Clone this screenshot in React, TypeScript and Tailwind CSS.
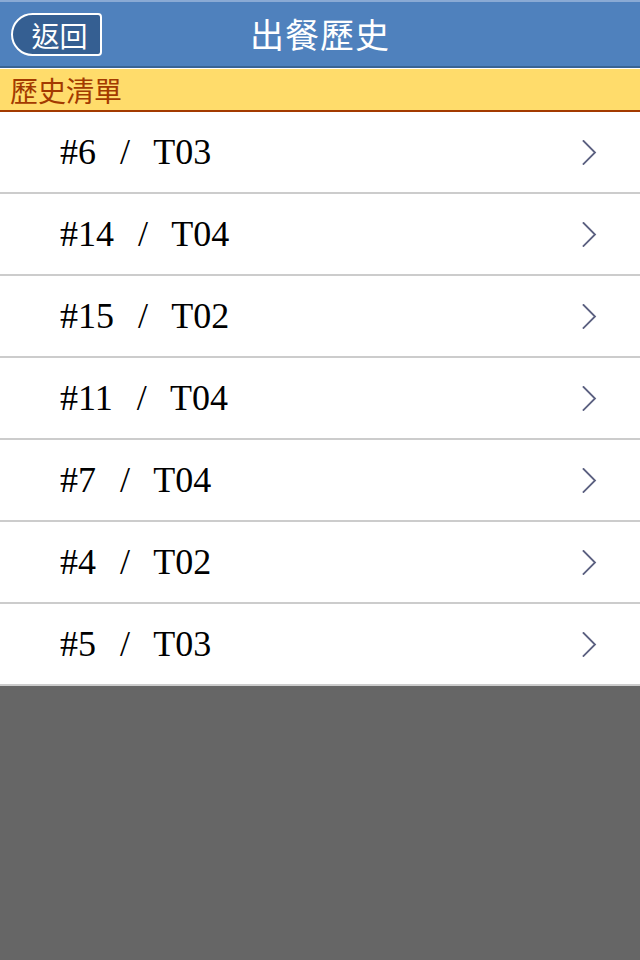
const ORDERS = [
  { id: 6, table: "T03" },
  { id: 14, table: "T04" },
  { id: 15, table: "T02" },
  { id: 11, table: "T04" },
  { id: 7, table: "T04" },
  { id: 4, table: "T02" },
  { id: 5, table: "T03" },
];

const CJK = "font-['Noto_Sans_CJK_TC',sans-serif]";

function Chevron() {
  return (
    <svg width="15" height="25" viewBox="0 0 15 25" fill="none" className="shrink-0">
      <path d="M1.5 1 L13 12.5 L1.5 24" stroke="#5b6080" strokeWidth="1.8" strokeLinecap="square" />
    </svg>
  );
}

export default function App() {
  return (
    <div className="min-h-screen bg-[#666666] flex flex-col">
      {/* Header */}
      <header className="relative h-[68px] shrink-0 bg-[#4f81bd] border-t-2 border-t-[#8aaad4] border-b-2 border-b-[#3a6494] flex items-center justify-center">
        <button
          className={`absolute left-[11px] top-[11px] h-[43px] w-[91px] rounded-l-[22px] rounded-r-[4px] border-2 border-white bg-[#355f92] text-white text-[28px] leading-none flex items-center justify-center pl-[6px] ${CJK}`}
        >
          返回
        </button>
        <h1 className={`text-white text-[34px] leading-none tracking-[1px] ${CJK}`}>出餐歷史</h1>
      </header>

      {/* Section title */}
      <div className="h-[41px] shrink-0 box-content bg-[#ffdc6b] border-t border-t-white border-b-2 border-b-[#a33a00] flex items-center px-[10px]">
        <span className={`text-[#a33a00] text-[28px] leading-none ${CJK}`}>歷史清單</span>
      </div>

      {/* List */}
      <ul className="bg-white">
        {ORDERS.map((o) => (
          <li
            key={o.id}
            className="h-[82px] border-b-2 border-b-[#cccccc] flex items-center justify-between pl-[60px] pr-[43px]"
          >
            <span className="font-['Liberation_Serif',serif] text-[36px] leading-none text-black [word-spacing:15px]">
              #{o.id} / {o.table}
            </span>
            <Chevron />
          </li>
        ))}
      </ul>
    </div>
  );
}
